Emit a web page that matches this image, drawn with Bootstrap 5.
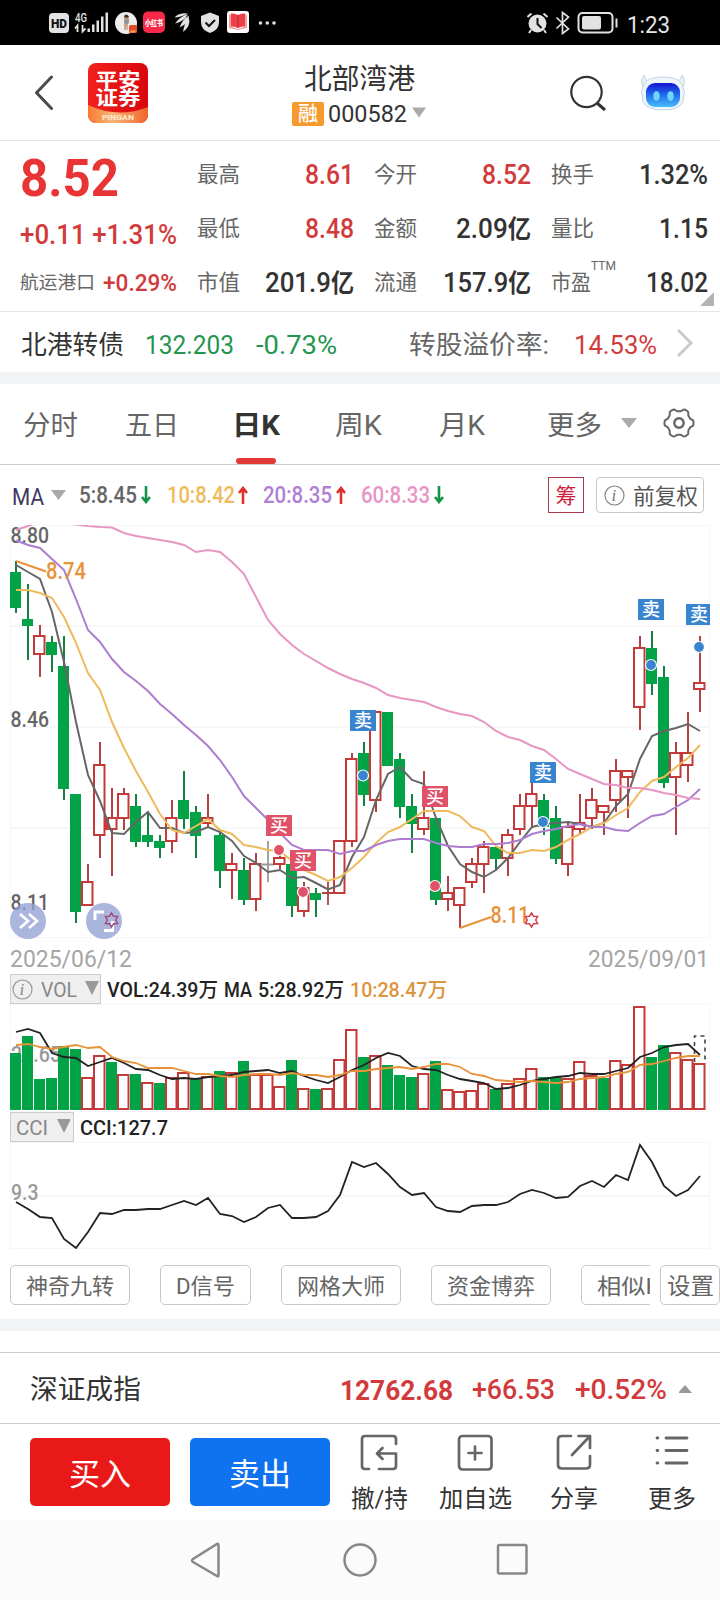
<!DOCTYPE html>
<html lang="zh-CN">
<head>
<meta charset="utf-8">
<meta name="viewport" content="width=device-width, initial-scale=1">
<title>北部湾港 000582</title>
<link href="https://cdn.jsdelivr.net/npm/bootstrap@5.3.0/dist/css/bootstrap.min.css" rel="stylesheet">
<style>
  body { width: 720px; height: 1600px; overflow: hidden; background: #fff; color: #333;
    font-family: Roboto, "Noto Sans CJK SC", sans-serif; font-size: 24px; line-height: 1; }
  svg { display: block; flex: none; }
  .chart { overflow: visible; }
  .fit { display: inline-block; white-space: nowrap; transform-origin: 0 50%; line-height: 1; text-align: left; }
  .tracks { display: grid; align-items: center; justify-items: start; }
  .up { color: #d23b3b; } .down { color: #24954f; } .dim { color: #666; }
  .f13 { font-size: 13px; } .f19 { font-size: 18.5px; } .f20 { font-size: 20px; } .f21 { font-size: 21.5px; } .f23 { font-size: 23px; }
  .f24 { font-size: 24px; } .f26 { font-size: 26px; } .f27 { font-size: 27px; } .f28 { font-size: 28px; }
  .med { font-weight: 500; }
  .rule { border-bottom: 1px solid #e6e6e6; }
  .gapbar { height: 12px; background: #f2f3f5; }

  .statusbar { height: 45px; background: #000; color: #e4e4e4; padding: 1px 0 0 48px; grid-template-columns: 479px 100px auto; }
  .topbar { height: 96px; padding-left: 34px; grid-template-columns: 54px 150px 331px 71px 1fr; }
  .logo { width: 60px; height: 60px; }
  .stock { width: 243px; }
  .stock-name { height: 32px; margin: 4px 0 6px; }
  .tag-rong { width: 32px; height: 24px; background: #f79a2e; color: #fff; font-size: 20px; border-radius: 2px; line-height: 24px; font-weight: 500; }

  .quote { height: 171px; padding: 6px 12px 0 20px; position: relative; }
  .quote-left { width: 177px; }
  .quote-left > div { height: 48px; }
  .quote-left > .price { height: 64px; color: #e83434; font-size: 52px; }
  .stats { display: grid; grid-template-columns: repeat(3, 157px); grid-auto-rows: 54px; column-gap: 20px; padding-top: 1px; }
  .stats b { font-weight: 500; font-size: 28px; }
  .stats i { font-style: normal; font-size: 25px; font-weight: 700; }
  .ttm { position: absolute; left: 591px; top: 118px; }
  .corner { position: absolute; left: 700px; top: 151px; }
  .bond { height: 60px; padding: 5px 0 0 21px; grid-template-columns: 124px 111px 153px 165px 102px 1fr; }

  .tabs-k { height: 81px; padding: 4px 0 0 23px; border-bottom: 1px solid #ccc; color: #666; grid-template-columns: 102px 107px 103px 104px 108px 74px 42px 1fr; position: relative; }
  .tabs-k svg { margin-bottom: 6px; }
  .tabs-k .on { color: #333; font-weight: 700; }
  .tabs-k .bar { position: absolute; left: 236px; bottom: 0; width: 40px; height: 6px; border-radius: 3px; background: #e13838; }
  .ma-row { height: 60px; padding-left: 12px; grid-template-columns: 39px 28px 62px 26px 71px 25px 73px 25px 73px 110px 48px 1fr; }
  .box-chou { width: 36px; height: 36px; border: 1.5px solid #a83a4a; color: #d01f3c; font-size: 21px; padding-top: 2px; }
  .box-fq { width: 108px; height: 36px; border: 1px solid #c8c8c8; border-radius: 4px; padding-left: 7px; gap: 8px; color: #555; }
  .box-fq .fit { margin-top: 3px; }

  .dates { height: 36px; padding: 9px 11px 0 10px; color: #a5a5a5; }
  .ind-row { height: 30px; padding-left: 10px; color: #222; }
  .ind-box { height: 30px; border: 1.5px solid #ccc; background: #efefef; color: #888; }
  .ind-box .fit { margin-top: 2px; }
  .ind-vol { width: 91px; padding-left: 1px; } .ind-cci { width: 64px; padding-left: 5px; }
  .ind-vals { grid-template-columns: 117px 34px 92px 1fr; padding: 2px 0 0 6px; }

  .tools { height: 70px; padding: 16px 0 0 10px; }
  .tools-scroll { width: 640px; gap: 30px; overflow: hidden; flex: none; }
  .tool { height: 40px; border: 1.5px solid #c8c8c8; border-radius: 5px; color: #666; flex: none; width: 120px; padding-top: 3px; }
  .tool.narrow { width: 91px; } .tool.setting { width: 60px; margin-left: 10px; }
  .index-row { height: 72px; padding-left: 30px; border-top: 1px solid #ccc; border-bottom: 1px solid #ccc; grid-template-columns: 310px 132px 103px 100px 1fr; padding-top: 5px; }
  .actions { height: 96px; padding-left: 30px; }
  .trade { width: 140px; height: 68px; border-radius: 5px; border: 0; color: #fff; padding: 5px 0 0; font-size: 31px; line-height: 1; margin: 14px 20px 0 0; flex: none; }
  .buy { background: #e9191a; } .sell { background: #0f72ee; }
  .act { height: 96px; padding-top: 10px; gap: 15px; color: #333; font-size: 24px; flex: none; }
  .act-hold { width: 58px; } .act-fav { width: 134px; } .act-share { width: 64px; } .act-more { width: 132px; }
  .navbar-sys { height: 80px; background: #fbfbfb; padding-left: 190px; grid-template-columns: 153px 153px 1fr; }
  .spacer { height: 21px; }
  .chart text { font-family: Roboto, "Noto Sans CJK SC", sans-serif; }
</style>
</head>
<body>

<header class="statusbar tracks">
  <svg width="232" height="24" viewBox="48 11 232 24" fill="#e2e2e2">
    <rect x="49" y="13" width="20" height="20" rx="4"/>
    <text x="51" y="28" font-size="13" font-weight="900" fill="#111" textLength="16" lengthAdjust="spacingAndGlyphs">HD</text>
    <text x="75" y="21.500" font-size="12" font-weight="500" textLength="12" lengthAdjust="spacingAndGlyphs">4G</text>
    <path d="M77.500 32v-6.500l-2.500 3M82.500 25v6.500l3-3" fill="none" stroke="#e2e2e2" stroke-width="1.800"/>
    <path d="M87.500 28.500h2.500v3.500h-2.500zM92 24.500h2.500V32H92zM96.500 20.500H99V32h-2.500zM101 16.500h2.500V32H101zM105.500 12.500h2.500V32h-2.500z"/>
    <circle cx="126" cy="23" r="11" fill="#f1eeea"/>
    <path d="M124 18h5l-.5 6h-.7v6h-1.300v-5l-1 5h-1.300z" fill="#c49a82"/>
    <path d="M124 17.500q0-3.500 3-3l2 2-1 1.500z" fill="#4b332c"/><path d="M124.500 20h4.500l-.5 3.500h-3.500z" fill="#7d93a8"/>
    <rect x="129" y="25" width="8" height="8" rx="1.500" fill="#ea4a2c"/><path d="M130.500 30.500h5v2h-5z" fill="#f7a64f"/>
    <rect x="143" y="11.500" width="22" height="21.500" rx="5" fill="#f92848"/>
    <text x="145" y="25.500" font-size="8" font-weight="900" fill="#fff" textLength="18" lengthAdjust="spacingAndGlyphs">小红书</text>
    <path d="M174.500 17.500q5-5 13-4-7 4-13 4zM175 23.500q5-7 13-9.500-4 8-13 9.500zM179.500 27.500q3-8 9.500-12 0 8-9.500 12zM183 32q1-8 6-14 2 8-6 14z"/>
    <path d="M210 12.500l9 3.500v6q0 8-9 11-9-3-9-11v-6z"/><path d="M205.500 22.500l3.500 3.500 6-6" fill="none" stroke="#111" stroke-width="2"/>
    <rect x="227" y="11" width="22" height="22" rx="3" fill="#fff"/>
    <path d="M229 15l2-.5v12l7 2.500 7-2.500v-12l2 .5v13l-9 2-9-2z" fill="#f2a0a0"/>
    <path d="M231 13.500q4-.5 7 1.500v13q-3-2-7-1.500zM238 15q3-2 7-1.500v13q-4-.5-7 1.500z" fill="#ee3e48"/><path d="M238 15v13" stroke="#b92632"/>
    <circle cx="260.500" cy="23" r="1.800"/><circle cx="267.300" cy="23" r="1.800"/><circle cx="274" cy="23" r="1.800"/>
  </svg>
  <svg width="92" height="24" viewBox="527 11 92 24" fill="none" stroke="#e2e2e2" stroke-width="2">
    <circle cx="537.500" cy="23.500" r="9" fill="#e2e2e2" stroke="none"/><path d="M527.500 17l4-3.500M547.500 17l-4-3.500M531 30l-2 3M544 30l2 3"/><path d="M537.500 18v6l4 4" stroke="#111"/>
    <path d="M556.500 17.500l12 11.500-6 4.500V12.500l6 4.500-12 11.500" stroke-width="1.700"/>
    <rect x="578.500" y="13" width="34" height="19.500" rx="4"/><rect x="582" y="16" width="19" height="13.500" rx="2" fill="#e2e2e2" stroke="none"/><path d="M616.500 18.500v9"/>
  </svg>
  <span class="fit f24 pt-1" data-w="43">1:23</span>
</header>

<nav class="topbar tracks rule">
  <svg width="22" height="36" viewBox="35 75 22 36"><path d="M52.500 77L37.500 92.700 52.500 108.500" fill="none" stroke="#4a4a4a" stroke-width="3" stroke-linecap="round" stroke-linejoin="round"/></svg>
  <svg class="logo" viewBox="0 0 60 60">
    <defs>
      <linearGradient id="red" x1="0" x2="1"><stop stop-color="#f1221c"/><stop offset="1" stop-color="#d9060e"/></linearGradient>
      <linearGradient id="gold" x1="0" x2="1"><stop stop-color="#f7792e"/><stop offset=".4" stop-color="#f9b777"/><stop offset="1" stop-color="#f0632c"/></linearGradient>
      <clipPath id="sq"><rect width="60" height="60" rx="8"/></clipPath>
    </defs>
    <g clip-path="url(#sq)"><path fill="url(#red)" d="M0 0h60v60H0z"/><path fill="url(#gold)" d="M0 42q30 14 60 2v16H0z"/></g>
    <g fill="#fff" font-weight="700" font-family="Noto Sans CJK SC"><text x="7.500" y="23.500" font-size="19" textLength="45" lengthAdjust="spacingAndGlyphs">平安</text><text x="7.500" y="42" font-size="19" textLength="45" lengthAdjust="spacingAndGlyphs">证券</text>
    <text x="14" y="57" font-size="7.500" fill="#ffe9d0" font-family="Roboto" textLength="32" lengthAdjust="spacingAndGlyphs">PINGAN</text></g>
  </svg>
  <div class="stock d-flex flex-column align-items-center">
    <div class="stock-name d-flex align-items-center"><span class="fit f28" data-w="111">北部湾港</span></div>
    <div class="d-flex align-items-center">
      <span class="tag-rong text-center me-1">融</span>
      <span class="fit f24" data-w="79">000582</span>
      <svg class="ms-1" width="16" height="20" viewBox="0 0 16 20"><path d="M1 3.500h14l-7 10z" fill="#aaa"/></svg>
    </div>
  </div>
  <svg width="38" height="38" viewBox="569 73 38 38" fill="none" stroke="#333"><circle cx="586.500" cy="91" r="15.200" stroke-width="2.200"/><path d="M597 102l8 7" stroke-width="3"/></svg>
  <svg width="46" height="40" viewBox="640 73 46 40">
    <defs><linearGradient id="face" x1="0" x2="0" y1="0" y2="1"><stop stop-color="#1612d2"/><stop offset=".45" stop-color="#1f66ea"/><stop offset="1" stop-color="#48bdfa"/></linearGradient></defs>
    <path d="M644 75q-4 6-1 12h8l1-6q-7 1-8-6zM682 75q4 6 1 12h-8l-1-6q7 1 8-6z" fill="#eaf1fa" stroke="#c0d1e6"/>
    <path d="M644 84q4-7 19-7t19 7l2.500 8-1.500 10q-4 8-20 8t-20-8l-1.500-10z" fill="#eef4fc" stroke="#c5d5e8"/>
    <rect x="646" y="83" width="34" height="24" rx="9" fill="url(#face)"/>
    <ellipse cx="656.500" cy="96" rx="3.200" ry="4.800" fill="#6ed6fa"/><ellipse cx="670.500" cy="96" rx="3.200" ry="4.800" fill="#6ed6fa"/>
  </svg>
</nav>

<section class="quote d-flex rule">
  <div class="quote-left">
    <div class="price d-flex align-items-center fw-bold"><span class="fit" data-w="99">8.52</span></div>
    <div class="d-flex align-items-center"><span class="fit up f27 med" data-w="157">+0.11 +1.31%</span></div>
    <div class="d-flex align-items-center"><span class="fit f19 dim" data-w="75">航运港口</span><span class="fit up f23 med ms-2" data-w="74">+0.29%</span></div>
  </div>
  <div class="stats" id="stats"></div>
  <span class="ttm fit f13 dim" data-w="25">TTM</span>
  <svg class="corner" width="14" height="14"><path d="M14 0v14H0z" fill="#b3b3b3"/></svg>
</section>

<section class="bond tracks">
  <span class="fit f26" data-w="103">北港转债</span>
  <span class="fit f26 down" data-w="89">132.203</span>
  <span class="fit f26 down" data-w="81">-0.73%</span>
  <span class="fit f26 dim" data-w="140">转股溢价率:</span>
  <span class="fit f26 up" data-w="83">14.53%</span>
  <svg class="mb-1" width="18" height="30" viewBox="0 0 18 30"><path d="M2 2l13 13L2 28" fill="none" stroke="#c8c8c8" stroke-width="2.800"/></svg>
</section>
<div class="gapbar"></div>

<nav class="tabs-k tracks">
  <span class="fit f27" data-w="55">分时</span>
  <span class="fit f27" data-w="54">五日</span>
  <span class="fit f27 on" data-w="48">日K</span>
  <span class="fit f27" data-w="47">周K</span>
  <span class="fit f27" data-w="46">月K</span>
  <span class="fit f27" data-w="55">更多</span>
  <svg width="16" height="12"><path d="M0 1h16l-8 10z" fill="#aaa"/></svg>
  <svg width="32" height="32" viewBox="-16 -16 32 32" fill="none" stroke="#666" stroke-width="2"><path id="gear"/><circle r="4.700" stroke-width="2.400"/></svg>
  <span class="bar"></span>
</nav>

<section class="ma-row tracks">
  <span class="fit f23 pt-1" style="color:#3c3862" data-w="32">MA</span>
  <svg width="16" height="12"><path d="M0 1h15l-7.500 10z" fill="#aaa"/></svg>
  <span class="fit f23 med dim" data-w="58">5:8.45</span><svg width="10" height="18"><path d="M5 0v15M1 11l4 5 4-5" stroke="#159447" stroke-width="2.600" fill="none"/></svg>
  <span class="fit f23 med" style="color:#efbb5b" data-w="68">10:8.42</span><svg width="10" height="18"><path d="M5 18V3M1 7l4-5 4 5" stroke="#df3030" stroke-width="2.600" fill="none"/></svg>
  <span class="fit f23 med" style="color:#b17fd4" data-w="69">20:8.35</span><svg width="10" height="18"><path d="M5 18V3M1 7l4-5 4 5" stroke="#df3030" stroke-width="2.600" fill="none"/></svg>
  <span class="fit f23 med" style="color:#e994c6" data-w="69">60:8.33</span><svg width="10" height="18"><path d="M5 0v15M1 11l4 5 4-5" stroke="#159447" stroke-width="2.600" fill="none"/></svg>
  <span class="box-chou d-flex align-items-center justify-content-center ms-1">筹</span>
  <span class="box-fq d-flex align-items-center ms-1">
    <svg width="21" height="21" viewBox="0 0 21 21"><circle cx="10.500" cy="10.500" r="9.500" fill="none" stroke="#888" stroke-width="1.200"/><text x="7.500" y="16" font-family="Liberation Serif" font-style="italic" font-size="17" fill="#777">i</text></svg>
    <span class="fit f21" data-w="65">前复权</span>
  </span>
</section>

<svg class="chart" id="kline" width="720" height="413" viewBox="0 525 720 413"></svg>
<div class="dates d-flex justify-content-between align-items-start"><span class="fit f24" data-w="122">2025/06/12</span><span class="fit f24" data-w="121">2025/09/01</span></div>

<div class="ind-row d-flex">
  <div class="ind-box ind-vol d-flex align-items-center">
    <svg width="21" height="21" viewBox="0 0 21 21"><circle cx="10.500" cy="10.500" r="9.500" fill="none" stroke="#999" stroke-width="1.200"/><text x="7.500" y="16" font-family="Liberation Serif" font-style="italic" font-size="17" fill="#888">i</text></svg>
    <span class="fit f20 ms-2" data-w="36">VOL</span>
    <svg class="ms-2" width="14" height="17"><path d="M0 0h14L7 14z" fill="#999"/></svg>
  </div>
  <div class="ind-vals tracks med"><span class="fit f20" data-w="111">VOL:24.39万</span><span class="fit f20" data-w="28">MA</span><span class="fit f20" data-w="86">5:28.92万</span><span class="fit f20" style="color:#dd943c" data-w="97">10:28.47万</span></div>
</div>
<svg class="chart" id="volume" width="720" height="108" viewBox="0 1004 720 108"></svg>
<div class="ind-row d-flex">
  <div class="ind-box ind-cci d-flex align-items-center"><span class="fit f20" data-w="32">CCI</span><svg class="ms-2" width="14" height="17"><path d="M1 0h14L8 14z" fill="#999"/></svg></div>
  <div class="ind-vals tracks med"><span class="fit f20" data-w="88">CCI:127.7</span></div>
</div>
<svg class="chart" id="cci" width="720" height="107" viewBox="0 1142 720 107"></svg>

<div class="tools d-flex">
  <div class="tools-scroll d-flex">
    <span class="tool d-flex align-items-center justify-content-center"><span class="fit f21" data-w="88">神奇九转</span></span>
    <span class="tool narrow d-flex align-items-center justify-content-center"><span class="fit f21" data-w="59">D信号</span></span>
    <span class="tool d-flex align-items-center justify-content-center"><span class="fit f21" data-w="88">网格大师</span></span>
    <span class="tool d-flex align-items-center justify-content-center"><span class="fit f21" data-w="88">资金博弈</span></span>
    <span class="tool d-flex align-items-center justify-content-center"><span class="fit f21" data-w="88">相似K线</span></span>
  </div>
  <span class="tool setting d-flex align-items-center justify-content-center"><span class="fit f23" data-w="47">设置</span></span>
</div>
<div class="gapbar"></div>
<div class="spacer"></div>

<section class="index-row tracks">
  <span class="fit f27" data-w="111">深证成指</span>
  <span class="fit f28 up fw-bold" data-w="113">12762.68</span>
  <span class="fit f27 up med" data-w="83">+66.53</span>
  <span class="fit f27 up med" data-w="92">+0.52%</span>
  <svg class="ms-1 mb-1" width="15" height="20"><path d="M-1 14h14L6 6z" fill="#999"/></svg>
</section>

<section class="actions d-flex align-items-start">
  <button class="trade buy">买入</button>
  <button class="trade sell">卖出</button>
  <div class="act act-hold d-flex flex-column align-items-center">
    <svg width="38" height="38" viewBox="0 0 38 38" fill="none" stroke="#666" stroke-width="2.700" stroke-linecap="round" stroke-linejoin="round"><path d="M36 10V5q0-3-3-3H5Q2 2 2 5v27q0 3 3 3h4M36 19.500H18M22.500 14L17 19.500l5.500 5.500M36 19.500V32q0 3-3 3H19"/></svg>
    <span class="fit" data-w="57">撤/持</span>
  </div>
  <div class="act act-fav d-flex flex-column align-items-center">
    <svg width="38" height="38" viewBox="0 0 38 38" fill="none" stroke="#666" stroke-width="2.700" stroke-linecap="round"><rect x="3" y="2" width="32.500" height="33.500" rx="3.500"/><path d="M19 12.500v13M12.500 19h13"/></svg>
    <span class="fit" data-w="73">加自选</span>
  </div>
  <div class="act act-share d-flex flex-column align-items-center">
    <svg width="38" height="38" viewBox="0 0 38 38" fill="none" stroke="#666" stroke-width="2.700" stroke-linecap="round" stroke-linejoin="round"><path d="M16 2H7Q3 2 3 6v25q0 3.500 4 3.500h24q4 0 4-4V22M23.500 2H35v12M35 2L17 21"/></svg>
    <span class="fit" data-w="48">分享</span>
  </div>
  <div class="act act-more d-flex flex-column align-items-center">
    <svg width="38" height="38" viewBox="0 0 38 38" fill="none" stroke="#666" stroke-width="2.800" stroke-linecap="round"><path d="M13 4h21M13 16.500h21M13 29h21M4 4h.8M4 16.500h.8M4 29h.8"/></svg>
    <span class="fit" data-w="48">更多</span>
  </div>
</section>

<footer class="navbar-sys tracks">
  <svg width="32" height="38" viewBox="0 0 32 38"><path d="M28.500 4v30.500q0 1.500-1.500.5L3 21q-2-1.500 0-3L27 3q1.500-.5 1.500 1z" fill="none" stroke="#888" stroke-width="2.500"/></svg>
  <svg width="36" height="36"><circle cx="17" cy="18" r="15.500" fill="none" stroke="#888" stroke-width="2.500"/></svg>
  <svg width="34" height="34"><rect x="2" y="2" width="28.500" height="28.500" rx="1.500" fill="none" stroke="#888" stroke-width="2.500"/></svg>
</footer>

<script>
// Quote statistics: label, value, unit, value width, colour class
const stats = [
  ['最高','8.61','',49,'up'],['今开','8.52','',49,'up'],['换手','1.32%','',69,''],
  ['最低','8.48','',49,'up'],['金额','2.09','亿',75,''],['量比','1.15','',49,''],
  ['市值','201.9','亿',89,''],['流通','157.9','亿',88,''],['市盈','18.02','',62,'']
];
document.getElementById('stats').innerHTML = stats.map(([l,v,u,w,c]) =>
  `<div class="d-flex justify-content-between align-items-center"><span class="fit f21 dim" data-w="${l==='市盈'?40:43}">${l}</span><b class="fit ${c}" data-w="${w}">${v}${u?`<i>${u}</i>`:''}</b></div>`).join('');

// Candles: direction (G falling, R rising, X flat), high, body top, body bottom, low
const candles = `G 561 572 608 613,G 584 619 626 660,R 625 635 655 677,G 636 642 655 672,G 636 666 789 800,G 794 794 912 923,R 864 881 906 906,R 742 764 836 858,R 788 817 830 876,R 788 793 819 830,G 794 806 842 847,G 812 835 842 847,G 835 841 848 858,R 800 817 842 853,G 771 800 819 829,G 806 812 836 858,R 794 817 824 828,G 830 835 871 888,R 853 863 871 899,G 858 870 900 905,R 853 863 900 911,X 841 864 865 882,R 853 857 865 869,G 864 864 906 917,R 882 887 912 917,G 888 893 900 917,R 882 892.5 894.500 905,R 840 840 894 894,R 753 758 842 847,G 742 753 795 806,R 711 711 801 812,G 712 712 766 766,G 753 759 807 818,G 794 806 824 853,R 771 817 830 835,G 818 818 900 905,R 876 892 900 911,R 887 887 906 928,R 858 863 883 888,R 841 846 865 893,G 847 847 859 870,R 829 834 859 876,R 794 805 830 835,R 780 793 807 828,G 794 800 827 835,G 806 818 859 864,R 823 826 865 876,R 794 822 830 835,R 788 799 819 829,R 805 805 813 835,R 759 770 801 812,R 770 770 778 818,R 636 647 708 730,G 631 648 684 695,G 666 677 783 788,R 742 752 778 835,R 712 752 766 782,R 636 682 690 712`
  .split(',').map(s => { const [d,...n] = s.split(' '); return [d, ...n.map(Number)]; });
const ma5 = [565,572,579,612,662,722,775,801,833,834,822,812,828,828,833,832,827,832,841,856,863,872,870,878,877,883,889.5,885,857,837,800,774,767,780,784,818,846,864,872,877,870,858,842,827,824,823,822,824,827,823,806,794,759,736,731,728,724,731];
const ma10 = [590,590,593,598,617,643,673,690,722,748,771,792,814,830,833,826,819,830,834,845,847,850,851,861,870,875,881,877,868,857,843,832,827,819,811,811,811,816,827,831,846,853,853,850,851,847,840,834,827,823,815,808,792,781,777,767,758,745];
const ma20 = [540.5,545,548,559,570,599,630,642,659,672,681,691,704,714,725,735,746,760,777,796,808,820,833,845,850,850,850,854,851,851,845,841,839,839,839,843,846,847,847,844,844,843,840,834,831,829,826,824,827,827,830,831,823,816,814,807,800,789];
const ma60 = [530,526,522,521,523,524.5,526,527,527.5,533,536,538,540,542,545,552,550,552,562,574,597,620,634,645,654,661,668,674,679,683,688,695,698,700,702,707,711,714,716,722,731,737,740,746,750,759,769,774,779,784,785,788,788,790,793,795,798,799];
const vols = 'G1053,G1036,G1079,G1078,G1046,G1049,R1077,R1055,G1062,R1074,G1074,R1082,G1083,R1077,R1072,G1078,R1076,G1071,R1072,G1061,R1074,R1074,R1086,G1060,R1088,G1089,R1088,R1059,R1029,G1057,R1055,G1065,G1075,G1077,R1073,G1061,R1089,R1091,R1090,R1083,G1089,R1083,R1078,R1068,G1077,G1077,R1078,R1061,R1075,G1078,R1060,R1064,R1006,G1057,G1045,R1052,R1059,R1063'.split(',');
const vma5 = [1032,1029,1033,1053,1057,1058,1066,1062,1058,1063,1069,1070,1075,1079,1078,1079,1077,1076,1075,1072,1071,1070,1073,1071,1076,1080,1083,1077,1070,1065,1058,1053,1056,1066,1069,1070,1075,1079,1081,1083,1089,1088,1085,1081,1079,1077,1076,1073,1074,1074,1071,1068,1057,1053,1047,1045,1044,1055];
const vma10 = [1045,1044,1047,1049,1047,1045,1048,1047,1057,1061,1063,1068,1068,1068,1071,1074,1074,1076,1077,1075,1074,1074,1075,1073,1075,1075,1077,1075,1071,1071,1069,1068,1067,1069,1067,1064,1064,1067,1074,1076,1080,1081,1082,1081,1082,1083,1082,1079,1078,1077,1074,1072,1065,1064,1061,1058,1056,1056];
const cci = [1202,1209,1217,1218,1239,1248,1232,1213,1214,1210,1210,1209,1209,1205,1201,1205,1198,1214,1216,1222,1217,1208,1205,1218,1218,1217,1211,1195,1162,1167,1163,1174,1187,1195,1193,1207,1211,1212,1206,1205,1205,1202,1194,1190,1193,1198,1197,1186,1181,1187,1175,1180,1145,1162,1186,1196,1190,1176];

const RED = '#c43a3a', GREEN = '#02a347';
const line = (a, c, w = 2) => `<polyline points="${a.map((y, i) => (16 + 12 * i) + ',' + y).join(' ')}" fill="none" stroke="${c}" stroke-width="${w}"/>`;
const label = (x, y, s, w, c, f = 22.5) => `<text x="${x}" y="${y}" font-size="${f}" font-weight="500" fill="${c}" textLength="${w}" lengthAdjust="spacingAndGlyphs">${s}</text>`;
const frame = (t, b, mids) => `<g stroke="#f7f7f7" fill="none"><rect x="10.500" y="${t}" width="699" height="${b - t}"/>${mids.map(m => `<path d="M10 ${m}H709" stroke-width="1.800"/>`).join('')}</g>`;
const body = (i, d, t, b) => d === 'G' ? `<rect x="${10 + 12 * i}" y="${t}" width="11" height="${b - t}" fill="${GREEN}"/>`
  : `<rect x="${10 + 12 * i}" y="${t + 1}" width="10.500" height="${Math.max(b - t - 2, .1)}" fill="#fff" stroke="${RED}" stroke-width="2"/>`;
const star = (cx, cy, c) => { let p = ''; for (let k = 0; k < 12; k++) { const r = k % 2 ? 4.2 : 7, a = k * Math.PI / 6; p += `${cx + r * Math.sin(a)},${cy - r * Math.cos(a)} `; } return `<polygon points="${p}" fill="none" stroke="${c}" stroke-width="1.500"/>`; };
const badge = (x, y, s, w = 26) => `<rect x="${x}" y="${y}" width="${w}" height="21" fill="${s === '买' ? '#e05268' : '#3984cf'}"/><text x="${x + 13}" y="${y + 17}" font-size="18" font-weight="500" fill="#fff" text-anchor="middle">${s}</text>`;
const dot = (x, y, c) => `<circle cx="${x}" cy="${y}" r="5.500" fill="${c}" stroke="#fff" stroke-width="1.200"/>`;

let k = '<clipPath id="plot"><rect x="10" y="525" width="700" height="413"/></clipPath>' + frame(525.5, 937.5, [626, 727, 828]);
k += label(10.5, 543, '8.80', 38.5, '#666') + label(10.5, 726.5, '8.46', 38.5, '#666') + label(10.5, 910, '8.11', 38.5, '#666');
candles.forEach(([d, h, t, b, l], i) => {
  const x = 16 + 12 * i, c = d === 'G' ? '#15833f' : d === 'R' ? '#b04444' : '#999';
  if (d === 'X' || b - t < 3) { k += `<path d="M${x} ${h}V${l}M${x - 6} ${t + .5}H${x + 6}" stroke="${c}" stroke-width="1.800"/>`; return; }
  k += `<path d="M${x} ${h}V${t}M${x} ${b}V${l}" stroke="${c}" stroke-width="2"/>` + body(i, d, t, b);
});
k += '<path d="M105 818h4v11h-4z" fill="#e0302f"/>';
k += '<g clip-path="url(#plot)">' + line(ma5, '#666') + line(ma10, '#edbb5c') + line(ma20, '#ad7dd0') + line(ma60, '#e796c3') + '</g>';
k += '<path d="M16 561l30 10.500M460 928l31-11" stroke="#e8923a" stroke-width="2"/>';
k += label(46, 579, '8.74', 40, '#e8923a', 23) + label(490.5, 923, '8.11', 39, '#e8923a', 23) + star(531.5, 920, '#d43d4a');
k += '<circle cx="28" cy="921" r="18" fill="#8f9fd2" fill-opacity=".76"/><circle cx="104" cy="921" r="18" fill="#8f9fd2" fill-opacity=".76"/>';
k += '<g fill="none" stroke="#fff" stroke-width="2.700"><path d="M20 914l8 7-8 7M29 914l8 7-8 7"/><path d="M95 920v-8h9M112.500 921v9.500H104" stroke-width="3"/></g>' + star(111.5, 920, '#a34b79');
k += dot(363, 775.5, '#3984cf') + dot(279, 850, '#e05268') + dot(303, 892, '#e05268') + dot(435, 886, '#e05268') + dot(543, 822, '#3984cf') + dot(651, 665, '#3984cf') + dot(699, 647, '#3984cf');
k += badge(350, 710, '卖') + badge(266, 815, '买') + badge(290, 850, '买') + badge(422, 786, '买') + badge(530, 762, '卖') + badge(638, 599, '卖') + badge(686, 604, '卖', 24);
document.getElementById('kline').innerHTML = k;

let v = frame(1004.5, 1111.5, [1058]) + label(11, 1062, '27.65', 50, '#999');
vols.forEach((s, i) => { v += body(i, s[0], +s.slice(1), 1110); });
v += '<path d="M694.500 1062v-26h10.500v26" fill="none" stroke="#444" stroke-width="1.600" stroke-dasharray="4 4"/>' + line(vma5, '#222', 1.8) + line(vma10, '#e8923a', 1.8);
document.getElementById('volume').innerHTML = v;
document.getElementById('cci').innerHTML = frame(1142.5, 1248.5, [1196]) + label(11, 1200, '9.3', 27.5, '#999') + line(cci, '#222', 1.8);

// Settings gear: six-lobed outline
let g = '';
for (let a = 0; a <= 360; a += 4) { const t = a * Math.PI / 180, r = 13.2 + 1.4 * Math.tanh(2 * Math.cos(6 * t)); g += (a ? 'L' : 'M') + (r * Math.cos(t)).toFixed(1) + ' ' + (r * Math.sin(t)).toFixed(1); }
document.getElementById('gear').setAttribute('d', g + 'Z');

document.querySelectorAll('.fit[data-w]').forEach(e => {
  const w = +e.dataset.w, n = e.getBoundingClientRect().width;
  e.style.width = w + 'px';
  e.style.transform = `scaleX(${w / n})`;
  e.style.justifySelf = 'start';
});
</script>
<script src="https://cdn.jsdelivr.net/npm/bootstrap@5.3.0/dist/js/bootstrap.bundle.min.js"></script>
</body>
</html>
